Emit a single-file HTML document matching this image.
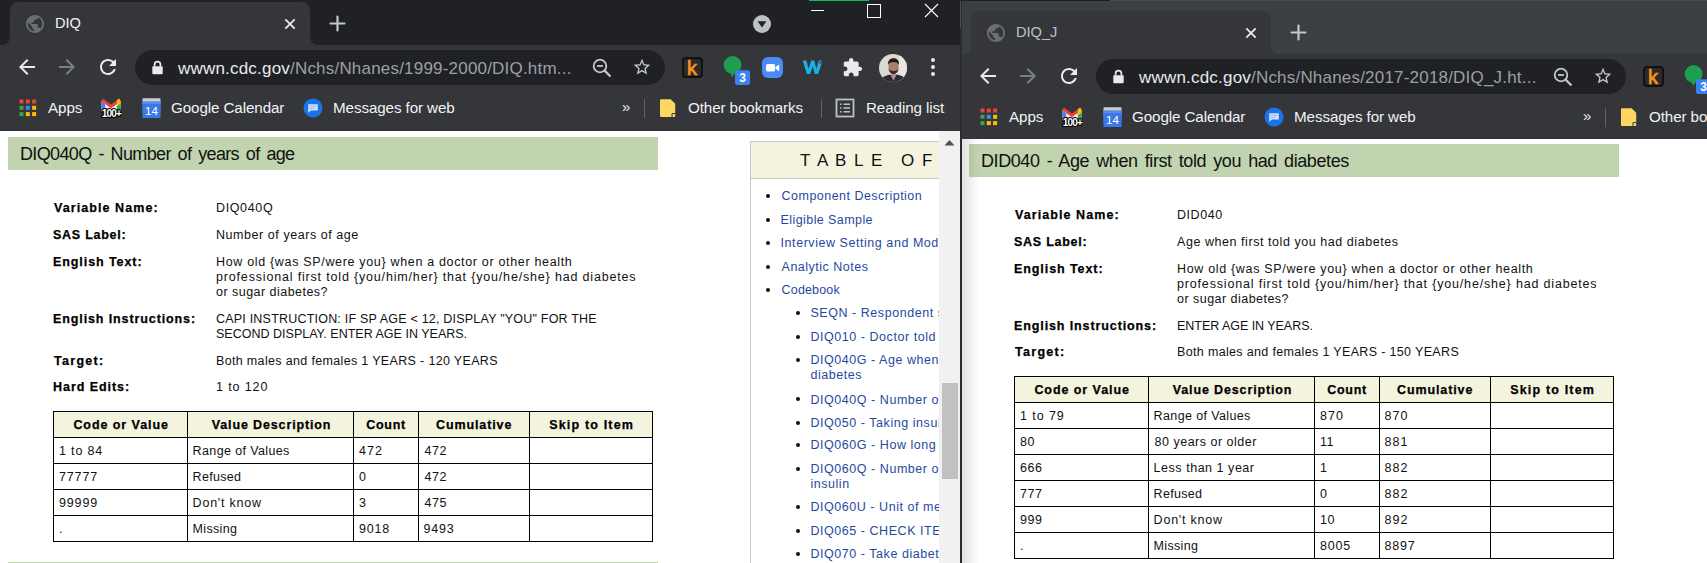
<!DOCTYPE html>
<html><head><meta charset="utf-8">
<style>
*{box-sizing:border-box;margin:0;padding:0}
html,body{width:1707px;height:563px;overflow:hidden;background:#fff;font-family:"Liberation Sans",sans-serif}
.a{position:absolute}
.win{position:absolute;top:0;overflow:hidden}
.ui{color:#f1f3f4;font-size:15px;white-space:pre;line-height:1}
.pg{font-size:12.5px;color:#111;white-space:pre;line-height:15px;letter-spacing:0.45px}
.lb{font-weight:bold;letter-spacing:0.8px;color:#000}
.hd{font-size:18px;color:#111;white-space:pre;line-height:1;letter-spacing:-0.2px}
.toc{font-size:12.5px;color:#1f4aa0;white-space:pre;line-height:15px;letter-spacing:0.45px}
.dot{position:absolute;width:4px;height:4px;border-radius:50%;background:#111}
.tx{white-space:pre;font-family:"Liberation Sans",sans-serif}
.tx.pg{font-size:12.5px;font-weight:400;color:#111;line-height:15px}
.tx.lb{font-size:12.5px;font-weight:700;color:#000;line-height:15px;-webkit-text-stroke:0.25px #000}
.tx.hd{font-size:18px;font-weight:400;color:#111;line-height:18px}
.tx.toc{font-size:12.5px;font-weight:400;color:#1f4aa0;line-height:15px}

</style></head><body>
<!-- LEFT WINDOW -->
<div class="win" style="left:0;width:960px;height:563px;background:#fff">
  <!-- tab strip -->
  <div class="a" style="left:0;top:0;width:960px;height:45px;background:#202124"></div>
  <div class="a" style="left:10px;top:2px;width:300px;height:43px;background:#35363a;border-radius:8px 8px 0 0"></div>
  <div class="a" style="left:2px;top:37px;width:8px;height:8px;background:radial-gradient(circle at 0 0,#202124 7.5px,#35363a 8.5px)"></div>
  <div class="a" style="left:310px;top:37px;width:8px;height:8px;background:radial-gradient(circle at 100% 0,#202124 7.5px,#35363a 8.5px)"></div>
  <!-- globe -->
  <svg class="a" style="left:26px;top:15px" width="18" height="18" viewBox="2 2 20 20"><path d="M12 2C6.48 2 2 6.48 2 12s4.48 10 10 10 10-4.48 10-10S17.52 2 12 2zm-1 17.93c-3.950-.49-7-3.85-7-7.93 0-.62.08-1.21.21-1.79L9 15v1c0 1.1.9 2 2 2v1.93zm6.9-2.54c-.26-.81-1-1.390-1.9-1.39h-1v-3c0-.55-.45-1-1-1H8v-2h2c.55 0 1-.45 1-1V7h2c1.1 0 2-.9 2-2v-.41c2.93 1.19 5 4.06 5 7.41 0 2.08-.8 3.97-2.1 5.39z" fill="#6b6e72"/></svg>
  <div class="a ui" style="left:55px;top:16px;font-size:14.6px">DIQ</div>
  <!-- tab close -->
  <svg class="a" style="left:284px;top:18px" width="12" height="12" viewBox="0 0 12 12"><path d="M1.3 1.3L10.7 10.7M10.7 1.3L1.3 10.7" stroke="#e8eaed" stroke-width="1.8"/></svg>
  <!-- new tab + -->
  <svg class="a" style="left:329px;top:15px" width="17" height="17" viewBox="0 0 17 17"><path d="M8.5 1.5V15.5M1.5 8.5H15.5" stroke="#c4c7cb" stroke-width="2.2" stroke-linecap="round"/></svg>
  <!-- tab search dropdown -->
  <svg class="a" style="left:752px;top:14px" width="20" height="20" viewBox="0 0 20 20"><circle cx="10" cy="10" r="9" fill="#bdc1c6"/><path d="M5.6 7.2H14.4L10 13.6z" fill="#202124"/></svg>
  <!-- window controls -->
  <div class="a" style="left:809px;top:0;width:60px;height:1.2px;background:#00c853"></div>
  <div class="a" style="left:811px;top:10px;width:13px;height:1px;background:#fff"></div>
  <div class="a" style="left:867px;top:4px;width:13.5px;height:13.5px;border:1px solid #fff"></div>
  <svg class="a" style="left:924px;top:3px" width="15" height="15" viewBox="0 0 15 15"><path d="M1 1L14 14M14 1L1 14" stroke="#fff" stroke-width="1.1"/></svg>

  <!-- toolbar -->
  <div class="a" style="left:0;top:45px;width:960px;height:86px;background:#35363a"></div>
  <svg class="a" style="left:15px;top:55px" width="24" height="24" viewBox="0 0 24 24"><path d="M20 11H7.83l5.59-5.59L12 4l-8 8 8 8 1.41-1.41L7.83 13H20v-2z" fill="#e8eaed"/></svg>
  <svg class="a" style="left:55px;top:55px" width="24" height="24" viewBox="0 0 24 24"><path d="M12 4l-1.41 1.41L16.17 11H4v2h12.17l-5.58 5.59L12 20l8-8z" fill="#7b7e82"/></svg>
  <svg class="a" style="left:95.5px;top:55px" width="24" height="24" viewBox="0 0 24 24"><path d="M17.65 6.35C16.2 4.9 14.21 4 12 4c-4.42 0-7.99 3.58-7.99 8s3.57 8 7.99 8c3.73 0 6.84-2.55 7.73-6h-2.08c-.82 2.33-3.04 4-5.65 4-3.31 0-6-2.69-6-6s2.69-6 6-6c1.66 0 3.14.69 4.22 1.78L13 11h7V4l-2.35 2.35z" fill="#e8eaed"/></svg>
  <!-- omnibox -->
  <div class="a" style="left:135px;top:50px;width:530px;height:35px;background:#202124;border-radius:17.5px"></div>
  <svg class="a" style="left:151px;top:60px" width="13" height="15" viewBox="0 0 13 15"><path d="M3.6 6.5V4.6a2.9 2.9 0 0 1 5.8 0V6.5" fill="none" stroke="#e8eaed" stroke-width="1.7"/><rect x="1.3" y="6.2" width="10.4" height="8" rx="1" fill="#e8eaed"/></svg>
  <div class="a ui" style="left:178px;top:60px;font-size:17px;letter-spacing:0.2px;color:#e8eaed">wwwn.cdc.gov<span style="color:#9aa0a6">/Nchs/Nhanes/1999-2000/DIQ.htm...</span></div>
  <!-- zoom-out icon -->
  <svg class="a" style="left:591px;top:57px" width="22" height="22" viewBox="0 0 22 22"><circle cx="9" cy="9" r="6.3" fill="none" stroke="#c4c7cb" stroke-width="1.8"/><path d="M6 9H12" stroke="#c4c7cb" stroke-width="1.8"/><path d="M13.6 13.6L19.5 19.5" stroke="#c4c7cb" stroke-width="2.2"/></svg>
  <!-- star -->
  <svg class="a" style="left:632px;top:57px" width="20" height="20" viewBox="0 0 24 24"><path d="M22 9.24l-7.19-.62L12 2 9.19 8.63 2 9.24l5.46 4.73L5.82 21 12 17.27 18.18 21l-1.63-7.03L22 9.24zM12 15.4l-3.76 2.27 1-4.28-3.32-2.88 4.38-.38L12 6.1l1.71 4.04 4.38.38-3.32 2.88 1 4.28L12 15.4z" fill="#c4c7cb"/></svg>
  <!-- extension: k -->
  <div class="a" style="left:682px;top:57px;width:21px;height:21px;background:#2a2a2a;border:2px solid #111;border-radius:4px"></div>
  <div class="a" style="left:687px;top:58px;font-size:20px;font-weight:normal;color:#f7941d;line-height:21px;-webkit-text-stroke:0.7px #f7941d">k</div>
  <!-- green chat + badge -->
  <svg class="a" style="left:722px;top:56px" width="30" height="30" viewBox="0 0 30 30"><circle cx="10.6" cy="9" r="8.9" fill="#1e9e50"/><path d="M7 15L10.5 21L13.5 15z" fill="#1e9e50"/><rect x="13" y="14.3" width="15" height="14.7" rx="2" fill="#3b82f0"/><text x="20.5" y="26.3" font-family="Liberation Sans" font-size="12" font-weight="bold" fill="#fff" text-anchor="middle">3</text></svg>
  <!-- zoom video -->
  <div class="a" style="left:762px;top:57px;width:21px;height:21px;background:#4a8cf5;border-radius:6px"></div>
  <svg class="a" style="left:762px;top:57px" width="21" height="21" viewBox="0 0 21 21"><rect x="4" y="7" width="9" height="7.5" rx="1.5" fill="#fff"/><path d="M13.5 9.8L17.2 7.4V14.2L13.5 11.8z" fill="#fff"/></svg>
  <!-- W -->
  <svg class="a" style="left:802px;top:59px" width="22" height="16" viewBox="0 0 22 16"><path d="M0.6 1.5H4.4L6.6 9.8L9.3 1.5H12.2L14.4 9.8L16.8 1.5H20.6L16.2 15H12.8L10.7 7.6L8.2 15H4.9z" fill="#1ab0e6"/><path d="M17.5 4.5L21 1.5" stroke="#35363a" stroke-width="1.2"/></svg>
  <!-- puzzle -->
  <svg class="a" style="left:842px;top:57px" width="21" height="21" viewBox="0 0 24 24"><path d="M20.5 11H19V7c0-1.1-.9-2-2-2h-4V3.5C13 2.12 11.88 1 10.5 1S8 2.12 8 3.5V5H4c-1.1 0-1.99.9-1.99 2v3.8H3.5c1.49 0 2.7 1.21 2.7 2.7s-1.21 2.7-2.7 2.7H2V20c0 1.1.9 2 2 2h3.8v-1.5c0-1.49 1.21-2.7 2.7-2.7 1.49 0 2.7 1.21 2.7 2.7V22H17c1.1 0 2-.9 2-2v-4h1.5c1.38 0 2.5-1.12 2.5-2.5S21.88 11 20.5 11z" fill="#e8eaed"/></svg>
  <!-- avatar -->
  <svg class="a" style="left:879px;top:54px" width="28" height="28" viewBox="0 0 28 28"><defs><clipPath id="avc"><circle cx="14" cy="14" r="14"/></clipPath></defs><g clip-path="url(#avc)"><rect width="28" height="28" fill="#dcd8d2"/><rect x="20" width="8" height="28" fill="#e8e6e2"/><ellipse cx="14.5" cy="13" rx="5.2" ry="6.6" fill="#a8806a"/><path d="M9 11c-.4-4.4 2-6.8 5.5-6.8s6 2.4 5.5 6.8c-.8-2-2.6-3-5.5-3s-4.7 1-5.5 3z" fill="#231a16"/><path d="M9.6 15c.6 3.4 2.4 5.2 4.9 5.2s4.3-1.8 4.9-5.2c-.8 1.3-2.4 1.9-4.9 1.9s-4.1-.6-4.9-1.9z" fill="#3b2a22"/><path d="M1 29c.6-5.4 4.8-8.6 13.5-8.6S27.4 23.6 28 29z" fill="#2e2a30"/><path d="M11.5 20.6L14.5 27L17.5 20.6z" fill="#b58d9a"/></g></svg>
  <!-- kebab -->
  <div class="dot" style="left:930.6px;top:58px;width:4px;height:4px;background:#e8eaed"></div>
  <div class="dot" style="left:930.6px;top:65.4px;width:4px;height:4px;background:#e8eaed"></div>
  <div class="dot" style="left:930.6px;top:72.4px;width:4px;height:4px;background:#e8eaed"></div>

  <!-- bookmarks bar -->
  <svg class="a" style="left:19px;top:99px" width="18" height="18" viewBox="0 0 18 18">
    <rect x="0.5" y="0.5" width="4" height="4" fill="#ea4335"/><rect x="6.8" y="0.5" width="4" height="4" fill="#ea4335"/><rect x="13.1" y="0.5" width="4" height="4" fill="#ea4335"/>
    <rect x="0.5" y="6.8" width="4" height="4" fill="#34a853"/><rect x="6.8" y="6.8" width="4" height="4" fill="#4285f4"/><rect x="13.1" y="6.8" width="4" height="4" fill="#fbbc04"/>
    <rect x="0.5" y="13.1" width="4" height="4" fill="#34a853"/><rect x="6.8" y="13.1" width="4" height="4" fill="#fbbc04"/><rect x="13.1" y="13.1" width="4" height="4" fill="#fbbc04"/>
  </svg>
  <div class="a ui" style="left:48px;top:100px;font-size:15.2px;letter-spacing:-0.1px">Apps</div>
  <!-- gmail 100+ -->
  <svg class="a" style="left:100px;top:97px" width="22" height="22" viewBox="0 0 22 22"><path d="M1.5 3.5L11 10.5L20.5 3.5V15H1.5z" fill="#f2f2f2"/><path d="M1.5 4V16H5.2V7.2z" fill="#4285f4"/><path d="M16.8 7.2V16H20.5V4z" fill="#34a853"/><path d="M1.5 4.2L11 11.2L20.5 4.2L19.2 1.6L11 7.6L2.8 1.6z" fill="#ea4335"/><path d="M16.8 3.2L19.2 1.6L20.5 4.2V6.8L16.8 9.4z" fill="#fbbc04"/><text x="11.5" y="20.2" font-family="Liberation Sans" font-size="10" font-weight="bold" fill="#fff" stroke="#000" stroke-width="2.2" paint-order="stroke" text-anchor="middle" letter-spacing="-0.8">100+</text></svg>
  <!-- calendar -->
  <svg class="a" style="left:141px;top:97px" width="21" height="22" viewBox="0 0 21 22"><path d="M1 4.5H20L19.5 21H1.5z" fill="#3b78e7"/><path d="M1 4.5H20V7H1z" fill="#4f8bf0"/><rect x="1.5" y="1.2" width="18" height="3.3" rx="0.8" fill="#c9cdd1"/><text x="10.5" y="17.6" font-family="Liberation Sans" font-size="11.5" fill="#fff" text-anchor="middle">14</text></svg>
  <div class="a ui" style="left:171px;top:100px;font-size:15.2px;letter-spacing:-0.1px">Google Calendar</div>
  <!-- messages -->
  <svg class="a" style="left:303px;top:98px" width="20" height="20" viewBox="0 0 20 20"><circle cx="10" cy="10" r="9.5" fill="#1a73e8"/><path d="M5.2 6.2H14.8V12.6H8L5.2 14.8z" fill="#d2e3fc"/><path d="M6.4 8.2H13.6M6.4 10.4H11.8" stroke="#8ab4f8" stroke-width="0.9"/></svg>
  <div class="a ui" style="left:333px;top:100px;font-size:15.2px;letter-spacing:-0.1px">Messages for web</div>
  <div class="a ui" style="left:622px;top:99px;font-size:15px;color:#e8eaed">»</div>
  <div class="a" style="left:644px;top:99px;width:1px;height:19px;background:#5f6368"></div>
  <svg class="a" style="left:659px;top:98px" width="18" height="20" viewBox="0 0 18 20"><path d="M1 2.2a1 1 0 0 1 1-1h9.6l4.6 4.6V18a1 1 0 0 1-1 1H2a1 1 0 0 1-1-1z" fill="#fdd663"/><path d="M13 19V15.6H16.4" fill="none" stroke="#35363a" stroke-width="1"/></svg>
  <div class="a ui" style="left:688px;top:100px;font-size:15.2px;letter-spacing:-0.1px">Other bookmarks</div>
  <div class="a" style="left:821px;top:99px;width:1px;height:19px;background:#5f6368"></div>
  <svg class="a" style="left:835px;top:98px" width="20" height="20" viewBox="0 0 20 20"><rect x="1.5" y="1.5" width="17" height="17" fill="none" stroke="#bdc1c6" stroke-width="1.8"/><path d="M5 6.2H6.5M8.5 6.2H15M5 10H6.5M8.5 10H15M5 13.8H6.5M8.5 13.8H15" stroke="#bdc1c6" stroke-width="1.5"/></svg>
  <div class="a ui" style="left:866px;top:100px;font-size:15.2px;letter-spacing:-0.1px">Reading list</div>

<div class="a" style="left:8px;top:137.0px;width:650px;height:33px;background:#c1d4af"></div>
<div class="a tx hd" style="left:20.00px;top:144.76px;letter-spacing:-0.645px;word-spacing:2.5px">DIQ040Q - Number of years of age</div>
<div class="a tx lb" style="left:54.00px;top:201.17px;letter-spacing:1.077px;">Variable Name:</div>
<div class="a tx pg" style="left:216.00px;top:201.17px;letter-spacing:0.633px;">DIQ040Q</div>
<div class="a tx lb" style="left:53.00px;top:228.17px;letter-spacing:0.744px;">SAS Label:</div>
<div class="a tx pg" style="left:216.00px;top:228.17px;letter-spacing:0.557px;">Number of years of age</div>
<div class="a tx lb" style="left:53.00px;top:255.17px;letter-spacing:0.917px;">English Text:</div>
<div class="a tx pg" style="left:216.00px;top:255.17px;letter-spacing:0.670px;">How old {was SP/were you} when a doctor or other health</div>
<div class="a tx pg" style="left:216.00px;top:270.17px;letter-spacing:0.828px;">professional first told {you/him/her} that {you/he/she} had diabetes</div>
<div class="a tx pg" style="left:216.00px;top:285.17px;letter-spacing:0.471px;">or sugar diabetes?</div>
<div class="a tx lb" style="left:53.00px;top:312.17px;letter-spacing:0.890px;">English Instructions:</div>
<div class="a tx pg" style="left:216.00px;top:312.17px;letter-spacing:0.207px;">CAPI INSTRUCTION: IF SP AGE &lt; 12, DISPLAY "YOU" FOR THE</div>
<div class="a tx pg" style="left:216.00px;top:327.17px;letter-spacing:0.009px;">SECOND DISPLAY. ENTER AGE IN YEARS.</div>
<div class="a tx lb" style="left:54.00px;top:354.17px;letter-spacing:1.300px;">Target:</div>
<div class="a tx pg" style="left:216.00px;top:354.17px;letter-spacing:0.337px;">Both males and females 1 YEARS - 120 YEARS</div>
<div class="a tx lb" style="left:53.00px;top:380.17px;letter-spacing:0.950px;">Hard Edits:</div>
<div class="a tx pg" style="left:216.00px;top:380.17px;letter-spacing:0.886px;">1 to 120</div>
<div class="a" style="left:53px;top:411px;width:600px;height:26px;background:#f4f3de"></div>
<div class="a" style="left:53px;top:411px;width:600px;height:1px;background:#000"></div>
<div class="a" style="left:53px;top:437px;width:600px;height:1px;background:#000"></div>
<div class="a" style="left:53px;top:463px;width:600px;height:1px;background:#000"></div>
<div class="a" style="left:53px;top:489px;width:600px;height:1px;background:#000"></div>
<div class="a" style="left:53px;top:515px;width:600px;height:1px;background:#000"></div>
<div class="a" style="left:53px;top:541px;width:600px;height:1px;background:#000"></div>
<div class="a" style="left:53px;top:411px;width:1px;height:131px;background:#000"></div>
<div class="a" style="left:187px;top:411px;width:1px;height:131px;background:#000"></div>
<div class="a" style="left:353px;top:411px;width:1px;height:131px;background:#000"></div>
<div class="a" style="left:418px;top:411px;width:1px;height:131px;background:#000"></div>
<div class="a" style="left:529px;top:411px;width:1px;height:131px;background:#000"></div>
<div class="a" style="left:652px;top:411px;width:1px;height:131px;background:#000"></div>
<div class="a tx lb" style="left:73.40px;top:418.17px;letter-spacing:0.933px;">Code or Value</div>
<div class="a tx lb" style="left:211.80px;top:418.17px;letter-spacing:0.862px;">Value Description</div>
<div class="a tx lb" style="left:366.20px;top:418.17px;letter-spacing:0.750px;">Count</div>
<div class="a tx lb" style="left:436.00px;top:418.17px;letter-spacing:0.889px;">Cumulative</div>
<div class="a tx lb" style="left:549.20px;top:418.17px;letter-spacing:1.173px;">Skip to Item</div>
<div class="a tx pg" style="left:59.00px;top:444.17px;letter-spacing:0.833px;">1 to 84</div>
<div class="a tx pg" style="left:192.60px;top:444.17px;letter-spacing:0.371px;">Range of Values</div>
<div class="a tx pg" style="left:359.00px;top:444.17px;letter-spacing:1.050px;">472</div>
<div class="a tx pg" style="left:424.40px;top:444.17px;letter-spacing:0.550px;">472</div>
<div class="a tx pg" style="left:59.00px;top:470.17px;letter-spacing:0.850px;">77777</div>
<div class="a tx pg" style="left:192.60px;top:470.17px;letter-spacing:0.283px;">Refused</div>
<div class="a tx pg" style="left:359.00px;top:470.17px;letter-spacing:0.550px;">0</div>
<div class="a tx pg" style="left:424.40px;top:470.17px;letter-spacing:0.550px;">472</div>
<div class="a tx pg" style="left:59.00px;top:496.17px;letter-spacing:0.850px;">99999</div>
<div class="a tx pg" style="left:192.60px;top:496.17px;letter-spacing:0.778px;">Don't know</div>
<div class="a tx pg" style="left:359.00px;top:496.17px;letter-spacing:0.550px;">3</div>
<div class="a tx pg" style="left:424.40px;top:496.17px;letter-spacing:0.550px;">475</div>
<div class="a tx pg" style="left:59.00px;top:522.17px;letter-spacing:0.550px;">.</div>
<div class="a tx pg" style="left:192.60px;top:522.17px;letter-spacing:0.333px;">Missing</div>
<div class="a tx pg" style="left:359.00px;top:522.17px;letter-spacing:0.833px;">9018</div>
<div class="a tx pg" style="left:423.40px;top:522.17px;letter-spacing:0.833px;">9493</div>
<div class="a" style="left:750px;top:141px;width:200px;height:430px;border:1px solid #c8c8c8;border-right:none;background:#fff"></div>
<div class="a" style="left:751px;top:142px;width:200px;height:37px;background:#f4f3de;border-bottom:1px solid #c8c8c8"></div>
<div class="a tx hd" style="left:800.00px;top:151.76px;letter-spacing:0.000px;font-size:17px">T</div>
<div class="a tx hd" style="left:817.00px;top:151.76px;letter-spacing:0.000px;font-size:17px">A</div>
<div class="a tx hd" style="left:835.00px;top:151.76px;letter-spacing:0.000px;font-size:17px">B</div>
<div class="a tx hd" style="left:854.00px;top:151.76px;letter-spacing:0.000px;font-size:17px">L</div>
<div class="a tx hd" style="left:871.00px;top:151.76px;letter-spacing:0.000px;font-size:17px">E</div>
<div class="a tx hd" style="left:901.00px;top:151.76px;letter-spacing:0.000px;font-size:17px">O</div>
<div class="a tx hd" style="left:922.00px;top:151.76px;letter-spacing:0.000px;font-size:17px">F</div>
<div class="a" style="left:751px;top:180px;width:188px;height:383px;overflow:hidden">
<div class="dot" style="left:14.7px;top:13.5px"></div>
<div class="a tx toc" style="left:30.60px;top:8.67px;letter-spacing:0.475px;">Component Description</div>
<div class="dot" style="left:14.7px;top:37.7px"></div>
<div class="a tx toc" style="left:29.60px;top:32.87px;letter-spacing:0.414px;">Eligible Sample</div>
<div class="dot" style="left:14.7px;top:60.8px"></div>
<div class="a tx toc" style="left:29.60px;top:55.97px;letter-spacing:0.550px;">Interview Setting and Mode of Data Collection</div>
<div class="dot" style="left:14.7px;top:84.6px"></div>
<div class="a tx toc" style="left:30.60px;top:79.77px;letter-spacing:0.492px;">Analytic Notes</div>
<div class="dot" style="left:14.7px;top:107.7px"></div>
<div class="a tx toc" style="left:30.60px;top:102.87px;letter-spacing:0.157px;">Codebook</div>
<div class="dot" style="left:45.0px;top:130.8px"></div>
<div class="a tx toc" style="left:59.40px;top:125.97px;letter-spacing:0.550px;">SEQN - Respondent sequence number</div>
<div class="dot" style="left:45.0px;top:154.6px"></div>
<div class="a tx toc" style="left:59.40px;top:149.77px;letter-spacing:0.550px;">DIQ010 - Doctor told you have diabetes</div>
<div class="dot" style="left:45.0px;top:177.7px"></div>
<div class="a tx toc" style="left:59.40px;top:172.87px;letter-spacing:0.550px;">DIQ040G - Age when first told you had</div>
<div class="a tx toc" style="left:59.40px;top:187.87px;letter-spacing:0.550px;">diabetes</div>
<div class="dot" style="left:45.0px;top:217.4px"></div>
<div class="a tx toc" style="left:59.40px;top:212.57px;letter-spacing:0.550px;">DIQ040Q - Number of years of age</div>
<div class="dot" style="left:45.0px;top:240.5px"></div>
<div class="a tx toc" style="left:59.40px;top:235.67px;letter-spacing:0.550px;">DIQ050 - Taking insulin now</div>
<div class="dot" style="left:45.0px;top:263.3px"></div>
<div class="a tx toc" style="left:59.40px;top:258.47px;letter-spacing:0.550px;">DIQ060G - How long taking insulin</div>
<div class="dot" style="left:45.0px;top:287.3px"></div>
<div class="a tx toc" style="left:59.40px;top:282.47px;letter-spacing:0.550px;">DIQ060Q - Number of mos/yrs taking</div>
<div class="a tx toc" style="left:59.40px;top:297.47px;letter-spacing:0.550px;">insulin</div>
<div class="dot" style="left:45.0px;top:325.0px"></div>
<div class="a tx toc" style="left:59.40px;top:320.17px;letter-spacing:0.550px;">DIQ060U - Unit of measure</div>
<div class="dot" style="left:45.0px;top:348.5px"></div>
<div class="a tx toc" style="left:59.40px;top:343.67px;letter-spacing:0.550px;">DIQ065 - CHECK ITEM</div>
<div class="dot" style="left:45.0px;top:372.2px"></div>
<div class="a tx toc" style="left:59.40px;top:367.37px;letter-spacing:0.550px;">DIQ070 - Take diabetic pills to lower blood sugar</div>
</div>
<div class="a" style="left:939px;top:131px;width:21px;height:432px;background:#f1f1f1"></div>
<svg class="a" style="left:943px;top:137px" width="13" height="10" viewBox="0 0 13 10"><path d="M1.5 8.5L6.5 3L11.5 8.5z" fill="#505050"/></svg>
<div class="a" style="left:941.5px;top:383px;width:16px;height:96px;background:#c1c1c1"></div>
<div class="a" style="left:8px;top:562px;width:650px;height:2px;background:#c1d4af"></div>
</div>
<!-- RIGHT WINDOW -->
<div class="win" style="left:960px;width:747px;height:563px;background:#fff">
  <div class="a" style="left:0;top:0;width:747px;height:12px;background:#3c3f42"></div>
  <div class="a" style="left:0;top:0;width:150px;height:1px;background:#1e1e1e"></div>
  <div class="a" style="left:150px;top:0;width:600px;height:1px;background:#4a4b4e"></div>
  <div class="a" style="left:1px;top:9px;width:960px;height:554px">
  <!-- tab strip -->
  <div class="a" style="left:0;top:0;width:960px;height:45px;background:#3c3f42"></div>
  <div class="a" style="left:10px;top:2px;width:300px;height:43px;background:#35363a;border-radius:8px 8px 0 0"></div>
  <div class="a" style="left:2px;top:37px;width:8px;height:8px;background:radial-gradient(circle at 0 0,#3c3f42 7.5px,#35363a 8.5px)"></div>
  <div class="a" style="left:310px;top:37px;width:8px;height:8px;background:radial-gradient(circle at 100% 0,#3c3f42 7.5px,#35363a 8.5px)"></div>
  <!-- globe -->
  <svg class="a" style="left:26px;top:15px" width="18" height="18" viewBox="2 2 20 20"><path d="M12 2C6.48 2 2 6.48 2 12s4.48 10 10 10 10-4.48 10-10S17.52 2 12 2zm-1 17.93c-3.950-.49-7-3.85-7-7.93 0-.62.08-1.21.21-1.79L9 15v1c0 1.1.9 2 2 2v1.93zm6.9-2.54c-.26-.81-1-1.390-1.9-1.39h-1v-3c0-.55-.45-1-1-1H8v-2h2c.55 0 1-.45 1-1V7h2c1.1 0 2-.9 2-2v-.41c2.93 1.19 5 4.06 5 7.41 0 2.08-.8 3.97-2.1 5.39z" fill="#6b6e72"/></svg>
  <div class="a ui" style="left:55px;top:16px;font-size:14.6px;color:#bdc1c6">DIQ_J</div>
  <!-- tab close -->
  <svg class="a" style="left:284px;top:18px" width="12" height="12" viewBox="0 0 12 12"><path d="M1.3 1.3L10.7 10.7M10.7 1.3L1.3 10.7" stroke="#e8eaed" stroke-width="1.8"/></svg>
  <!-- new tab + -->
  <svg class="a" style="left:329px;top:15px" width="17" height="17" viewBox="0 0 17 17"><path d="M8.5 1.5V15.5M1.5 8.5H15.5" stroke="#c4c7cb" stroke-width="2.2" stroke-linecap="round"/></svg>
  <!-- toolbar -->
  <div class="a" style="left:0;top:45px;width:960px;height:86px;background:#35363a"></div>
  <svg class="a" style="left:15px;top:55px" width="24" height="24" viewBox="0 0 24 24"><path d="M20 11H7.83l5.59-5.59L12 4l-8 8 8 8 1.41-1.41L7.83 13H20v-2z" fill="#e8eaed"/></svg>
  <svg class="a" style="left:55px;top:55px" width="24" height="24" viewBox="0 0 24 24"><path d="M12 4l-1.41 1.41L16.17 11H4v2h12.17l-5.58 5.59L12 20l8-8z" fill="#7b7e82"/></svg>
  <svg class="a" style="left:95.5px;top:55px" width="24" height="24" viewBox="0 0 24 24"><path d="M17.65 6.35C16.2 4.9 14.21 4 12 4c-4.42 0-7.99 3.58-7.99 8s3.57 8 7.99 8c3.73 0 6.84-2.55 7.73-6h-2.08c-.82 2.33-3.04 4-5.65 4-3.31 0-6-2.69-6-6s2.69-6 6-6c1.66 0 3.14.69 4.22 1.78L13 11h7V4l-2.35 2.35z" fill="#e8eaed"/></svg>
  <!-- omnibox -->
  <div class="a" style="left:135px;top:50px;width:530px;height:35px;background:#202124;border-radius:17.5px"></div>
  <svg class="a" style="left:151px;top:60px" width="13" height="15" viewBox="0 0 13 15"><path d="M3.6 6.5V4.6a2.9 2.9 0 0 1 5.8 0V6.5" fill="none" stroke="#e8eaed" stroke-width="1.7"/><rect x="1.3" y="6.2" width="10.4" height="8" rx="1" fill="#e8eaed"/></svg>
  <div class="a ui" style="left:178px;top:60px;font-size:17px;letter-spacing:0.2px;color:#e8eaed">wwwn.cdc.gov<span style="color:#9aa0a6">/Nchs/Nhanes/2017-2018/DIQ_J.ht...</span></div>
  <!-- zoom-out icon -->
  <svg class="a" style="left:591px;top:57px" width="22" height="22" viewBox="0 0 22 22"><circle cx="9" cy="9" r="6.3" fill="none" stroke="#c4c7cb" stroke-width="1.8"/><path d="M6 9H12" stroke="#c4c7cb" stroke-width="1.8"/><path d="M13.6 13.6L19.5 19.5" stroke="#c4c7cb" stroke-width="2.2"/></svg>
  <!-- star -->
  <svg class="a" style="left:632px;top:57px" width="20" height="20" viewBox="0 0 24 24"><path d="M22 9.24l-7.19-.62L12 2 9.19 8.63 2 9.24l5.46 4.73L5.82 21 12 17.27 18.18 21l-1.63-7.03L22 9.24zM12 15.4l-3.76 2.27 1-4.28-3.32-2.88 4.38-.38L12 6.1l1.71 4.04 4.38.38-3.32 2.88 1 4.28L12 15.4z" fill="#c4c7cb"/></svg>
  <!-- extension: k -->
  <div class="a" style="left:682px;top:57px;width:21px;height:21px;background:#2a2a2a;border:2px solid #111;border-radius:4px"></div>
  <div class="a" style="left:687px;top:58px;font-size:20px;font-weight:normal;color:#f7941d;line-height:21px;-webkit-text-stroke:0.7px #f7941d">k</div>
  <!-- green chat + badge -->
  <svg class="a" style="left:722px;top:56px" width="30" height="30" viewBox="0 0 30 30"><circle cx="10.6" cy="9" r="8.9" fill="#1e9e50"/><path d="M7 15L10.5 21L13.5 15z" fill="#1e9e50"/><rect x="13" y="14.3" width="15" height="14.7" rx="2" fill="#3b82f0"/><text x="20.5" y="26.3" font-family="Liberation Sans" font-size="12" font-weight="bold" fill="#fff" text-anchor="middle">3</text></svg>
  <!-- zoom video -->
  <div class="a" style="left:762px;top:57px;width:21px;height:21px;background:#4a8cf5;border-radius:6px"></div>
  <svg class="a" style="left:762px;top:57px" width="21" height="21" viewBox="0 0 21 21"><rect x="4" y="7" width="9" height="7.5" rx="1.5" fill="#fff"/><path d="M13.5 9.8L17.2 7.4V14.2L13.5 11.8z" fill="#fff"/></svg>
  <!-- W -->
  <svg class="a" style="left:802px;top:59px" width="22" height="16" viewBox="0 0 22 16"><path d="M0.6 1.5H4.4L6.6 9.8L9.3 1.5H12.2L14.4 9.8L16.8 1.5H20.6L16.2 15H12.8L10.7 7.6L8.2 15H4.9z" fill="#1ab0e6"/><path d="M17.5 4.5L21 1.5" stroke="#35363a" stroke-width="1.2"/></svg>
  <!-- puzzle -->
  <svg class="a" style="left:842px;top:57px" width="21" height="21" viewBox="0 0 24 24"><path d="M20.5 11H19V7c0-1.1-.9-2-2-2h-4V3.5C13 2.12 11.88 1 10.5 1S8 2.12 8 3.5V5H4c-1.1 0-1.99.9-1.99 2v3.8H3.5c1.49 0 2.7 1.21 2.7 2.7s-1.21 2.7-2.7 2.7H2V20c0 1.1.9 2 2 2h3.8v-1.5c0-1.49 1.21-2.7 2.7-2.7 1.49 0 2.7 1.21 2.7 2.7V22H17c1.1 0 2-.9 2-2v-4h1.5c1.38 0 2.5-1.12 2.5-2.5S21.88 11 20.5 11z" fill="#e8eaed"/></svg>
  <!-- avatar -->
  <svg class="a" style="left:879px;top:54px" width="28" height="28" viewBox="0 0 28 28"><defs><clipPath id="avc"><circle cx="14" cy="14" r="14"/></clipPath></defs><g clip-path="url(#avc)"><rect width="28" height="28" fill="#dcd8d2"/><rect x="20" width="8" height="28" fill="#e8e6e2"/><ellipse cx="14.5" cy="13" rx="5.2" ry="6.6" fill="#a8806a"/><path d="M9 11c-.4-4.4 2-6.8 5.5-6.8s6 2.4 5.5 6.8c-.8-2-2.6-3-5.5-3s-4.7 1-5.5 3z" fill="#231a16"/><path d="M9.6 15c.6 3.4 2.4 5.2 4.9 5.2s4.3-1.8 4.9-5.2c-.8 1.3-2.4 1.9-4.9 1.9s-4.1-.6-4.9-1.9z" fill="#3b2a22"/><path d="M1 29c.6-5.4 4.8-8.6 13.5-8.6S27.4 23.6 28 29z" fill="#2e2a30"/><path d="M11.5 20.6L14.5 27L17.5 20.6z" fill="#b58d9a"/></g></svg>
  <!-- kebab -->
  <div class="dot" style="left:930.6px;top:58px;width:4px;height:4px;background:#e8eaed"></div>
  <div class="dot" style="left:930.6px;top:65.4px;width:4px;height:4px;background:#e8eaed"></div>
  <div class="dot" style="left:930.6px;top:72.4px;width:4px;height:4px;background:#e8eaed"></div>

  <!-- bookmarks bar -->
  <svg class="a" style="left:19px;top:99px" width="18" height="18" viewBox="0 0 18 18">
    <rect x="0.5" y="0.5" width="4" height="4" fill="#ea4335"/><rect x="6.8" y="0.5" width="4" height="4" fill="#ea4335"/><rect x="13.1" y="0.5" width="4" height="4" fill="#ea4335"/>
    <rect x="0.5" y="6.8" width="4" height="4" fill="#34a853"/><rect x="6.8" y="6.8" width="4" height="4" fill="#4285f4"/><rect x="13.1" y="6.8" width="4" height="4" fill="#fbbc04"/>
    <rect x="0.5" y="13.1" width="4" height="4" fill="#34a853"/><rect x="6.8" y="13.1" width="4" height="4" fill="#fbbc04"/><rect x="13.1" y="13.1" width="4" height="4" fill="#fbbc04"/>
  </svg>
  <div class="a ui" style="left:48px;top:100px;font-size:15.2px;letter-spacing:-0.1px">Apps</div>
  <!-- gmail 100+ -->
  <svg class="a" style="left:100px;top:97px" width="22" height="22" viewBox="0 0 22 22"><path d="M1.5 3.5L11 10.5L20.5 3.5V15H1.5z" fill="#f2f2f2"/><path d="M1.5 4V16H5.2V7.2z" fill="#4285f4"/><path d="M16.8 7.2V16H20.5V4z" fill="#34a853"/><path d="M1.5 4.2L11 11.2L20.5 4.2L19.2 1.6L11 7.6L2.8 1.6z" fill="#ea4335"/><path d="M16.8 3.2L19.2 1.6L20.5 4.2V6.8L16.8 9.4z" fill="#fbbc04"/><text x="11.5" y="20.2" font-family="Liberation Sans" font-size="10" font-weight="bold" fill="#fff" stroke="#000" stroke-width="2.2" paint-order="stroke" text-anchor="middle" letter-spacing="-0.8">100+</text></svg>
  <!-- calendar -->
  <svg class="a" style="left:141px;top:97px" width="21" height="22" viewBox="0 0 21 22"><path d="M1 4.5H20L19.5 21H1.5z" fill="#3b78e7"/><path d="M1 4.5H20V7H1z" fill="#4f8bf0"/><rect x="1.5" y="1.2" width="18" height="3.3" rx="0.8" fill="#c9cdd1"/><text x="10.5" y="17.6" font-family="Liberation Sans" font-size="11.5" fill="#fff" text-anchor="middle">14</text></svg>
  <div class="a ui" style="left:171px;top:100px;font-size:15.2px;letter-spacing:-0.1px">Google Calendar</div>
  <!-- messages -->
  <svg class="a" style="left:303px;top:98px" width="20" height="20" viewBox="0 0 20 20"><circle cx="10" cy="10" r="9.5" fill="#1a73e8"/><path d="M5.2 6.2H14.8V12.6H8L5.2 14.8z" fill="#d2e3fc"/><path d="M6.4 8.2H13.6M6.4 10.4H11.8" stroke="#8ab4f8" stroke-width="0.9"/></svg>
  <div class="a ui" style="left:333px;top:100px;font-size:15.2px;letter-spacing:-0.1px">Messages for web</div>
  <div class="a ui" style="left:622px;top:99px;font-size:15px;color:#e8eaed">»</div>
  <div class="a" style="left:644px;top:99px;width:1px;height:19px;background:#5f6368"></div>
  <svg class="a" style="left:659px;top:98px" width="18" height="20" viewBox="0 0 18 20"><path d="M1 2.2a1 1 0 0 1 1-1h9.6l4.6 4.6V18a1 1 0 0 1-1 1H2a1 1 0 0 1-1-1z" fill="#fdd663"/><path d="M13 19V15.6H16.4" fill="none" stroke="#35363a" stroke-width="1"/></svg>
  <div class="a ui" style="left:688px;top:100px;font-size:15.2px;letter-spacing:-0.1px">Other bookmarks</div>
  <div class="a" style="left:821px;top:99px;width:1px;height:19px;background:#5f6368"></div>
  <svg class="a" style="left:835px;top:98px" width="20" height="20" viewBox="0 0 20 20"><rect x="1.5" y="1.5" width="17" height="17" fill="none" stroke="#bdc1c6" stroke-width="1.8"/><path d="M5 6.2H6.5M8.5 6.2H15M5 10H6.5M8.5 10H15M5 13.8H6.5M8.5 13.8H15" stroke="#bdc1c6" stroke-width="1.5"/></svg>
  <div class="a ui" style="left:866px;top:100px;font-size:15.2px;letter-spacing:-0.1px">Reading list</div>

  </div>
  <div class="a" style="left:1px;top:7px;width:960px;height:556px">
   <div class="a" style="left:0;top:132px;width:960px;height:424px;background:#fff"></div>
<div class="a" style="left:8px;top:137.0px;width:650px;height:33px;background:#c1d4af"></div>
<div class="a tx hd" style="left:20.00px;top:144.76px;letter-spacing:-0.409px;word-spacing:2.5px">DID040 - Age when first told you had diabetes</div>
<div class="a tx lb" style="left:54.00px;top:201.17px;letter-spacing:1.077px;">Variable Name:</div>
<div class="a tx pg" style="left:216.00px;top:201.17px;letter-spacing:0.550px;">DID040</div>
<div class="a tx lb" style="left:53.00px;top:228.17px;letter-spacing:0.744px;">SAS Label:</div>
<div class="a tx pg" style="left:216.00px;top:228.17px;letter-spacing:0.557px;">Age when first told you had diabetes</div>
<div class="a tx lb" style="left:53.00px;top:255.17px;letter-spacing:0.917px;">English Text:</div>
<div class="a tx pg" style="left:216.00px;top:255.17px;letter-spacing:0.670px;">How old {was SP/were you} when a doctor or other health</div>
<div class="a tx pg" style="left:216.00px;top:270.17px;letter-spacing:0.828px;">professional first told {you/him/her} that {you/he/she} had diabetes</div>
<div class="a tx pg" style="left:216.00px;top:285.17px;letter-spacing:0.471px;">or sugar diabetes?</div>
<div class="a tx lb" style="left:53.00px;top:312.17px;letter-spacing:0.890px;">English Instructions:</div>
<div class="a tx pg" style="left:216.00px;top:312.17px;letter-spacing:-0.039px;">ENTER AGE IN YEARS.</div>
<div class="a tx lb" style="left:54.00px;top:338.17px;letter-spacing:1.300px;">Target:</div>
<div class="a tx pg" style="left:216.00px;top:338.17px;letter-spacing:0.341px;">Both males and females 1 YEARS - 150 YEARS</div>
<div class="a" style="left:53px;top:369px;width:600px;height:26px;background:#f4f3de"></div>
<div class="a" style="left:53px;top:369px;width:600px;height:1px;background:#000"></div>
<div class="a" style="left:53px;top:395px;width:600px;height:1px;background:#000"></div>
<div class="a" style="left:53px;top:421px;width:600px;height:1px;background:#000"></div>
<div class="a" style="left:53px;top:447px;width:600px;height:1px;background:#000"></div>
<div class="a" style="left:53px;top:473px;width:600px;height:1px;background:#000"></div>
<div class="a" style="left:53px;top:499px;width:600px;height:1px;background:#000"></div>
<div class="a" style="left:53px;top:525px;width:600px;height:1px;background:#000"></div>
<div class="a" style="left:53px;top:551px;width:600px;height:1px;background:#000"></div>
<div class="a" style="left:53px;top:369px;width:1px;height:183px;background:#000"></div>
<div class="a" style="left:187px;top:369px;width:1px;height:183px;background:#000"></div>
<div class="a" style="left:353px;top:369px;width:1px;height:183px;background:#000"></div>
<div class="a" style="left:418px;top:369px;width:1px;height:183px;background:#000"></div>
<div class="a" style="left:529px;top:369px;width:1px;height:183px;background:#000"></div>
<div class="a" style="left:652px;top:369px;width:1px;height:183px;background:#000"></div>
<div class="a tx lb" style="left:73.40px;top:376.17px;letter-spacing:0.933px;">Code or Value</div>
<div class="a tx lb" style="left:211.80px;top:376.17px;letter-spacing:0.862px;">Value Description</div>
<div class="a tx lb" style="left:366.20px;top:376.17px;letter-spacing:0.750px;">Count</div>
<div class="a tx lb" style="left:436.00px;top:376.17px;letter-spacing:0.889px;">Cumulative</div>
<div class="a tx lb" style="left:549.20px;top:376.17px;letter-spacing:1.173px;">Skip to Item</div>
<div class="a tx pg" style="left:59.00px;top:402.17px;letter-spacing:0.917px;">1 to 79</div>
<div class="a tx pg" style="left:192.60px;top:402.17px;letter-spacing:0.371px;">Range of Values</div>
<div class="a tx pg" style="left:359.00px;top:402.17px;letter-spacing:1.050px;">870</div>
<div class="a tx pg" style="left:423.40px;top:402.17px;letter-spacing:1.050px;">870</div>
<div class="a tx pg" style="left:59.00px;top:428.17px;letter-spacing:0.550px;">80</div>
<div class="a tx pg" style="left:193.60px;top:428.17px;letter-spacing:0.494px;">80 years or older</div>
<div class="a tx pg" style="left:359.00px;top:428.17px;letter-spacing:0.550px;">11</div>
<div class="a tx pg" style="left:423.40px;top:428.17px;letter-spacing:1.050px;">881</div>
<div class="a tx pg" style="left:59.00px;top:454.17px;letter-spacing:0.550px;">666</div>
<div class="a tx pg" style="left:192.60px;top:454.17px;letter-spacing:0.533px;">Less than 1 year</div>
<div class="a tx pg" style="left:359.00px;top:454.17px;letter-spacing:0.550px;">1</div>
<div class="a tx pg" style="left:423.40px;top:454.17px;letter-spacing:1.050px;">882</div>
<div class="a tx pg" style="left:59.00px;top:480.17px;letter-spacing:0.550px;">777</div>
<div class="a tx pg" style="left:192.60px;top:480.17px;letter-spacing:0.283px;">Refused</div>
<div class="a tx pg" style="left:359.00px;top:480.17px;letter-spacing:0.550px;">0</div>
<div class="a tx pg" style="left:423.40px;top:480.17px;letter-spacing:1.050px;">882</div>
<div class="a tx pg" style="left:59.00px;top:506.17px;letter-spacing:0.550px;">999</div>
<div class="a tx pg" style="left:192.60px;top:506.17px;letter-spacing:0.778px;">Don't know</div>
<div class="a tx pg" style="left:359.00px;top:506.17px;letter-spacing:0.550px;">10</div>
<div class="a tx pg" style="left:423.40px;top:506.17px;letter-spacing:1.050px;">892</div>
<div class="a tx pg" style="left:59.00px;top:532.17px;letter-spacing:0.550px;">.</div>
<div class="a tx pg" style="left:192.60px;top:532.17px;letter-spacing:0.333px;">Missing</div>
<div class="a tx pg" style="left:359.00px;top:532.17px;letter-spacing:0.833px;">8005</div>
<div class="a tx pg" style="left:423.40px;top:532.17px;letter-spacing:0.833px;">8897</div>
  </div>
  <div class="a" style="left:1px;top:139px;width:18px;height:424px;background:linear-gradient(90deg,rgba(0,0,0,0.13),rgba(0,0,0,0))"></div>
  <div class="a" style="left:0;top:0;width:1.5px;height:563px;background:#2a2b2e"></div>
  <div class="a" style="left:0;top:1px;width:1px;height:27px;background:#4a4c50"></div>
</div>
</body></html>
